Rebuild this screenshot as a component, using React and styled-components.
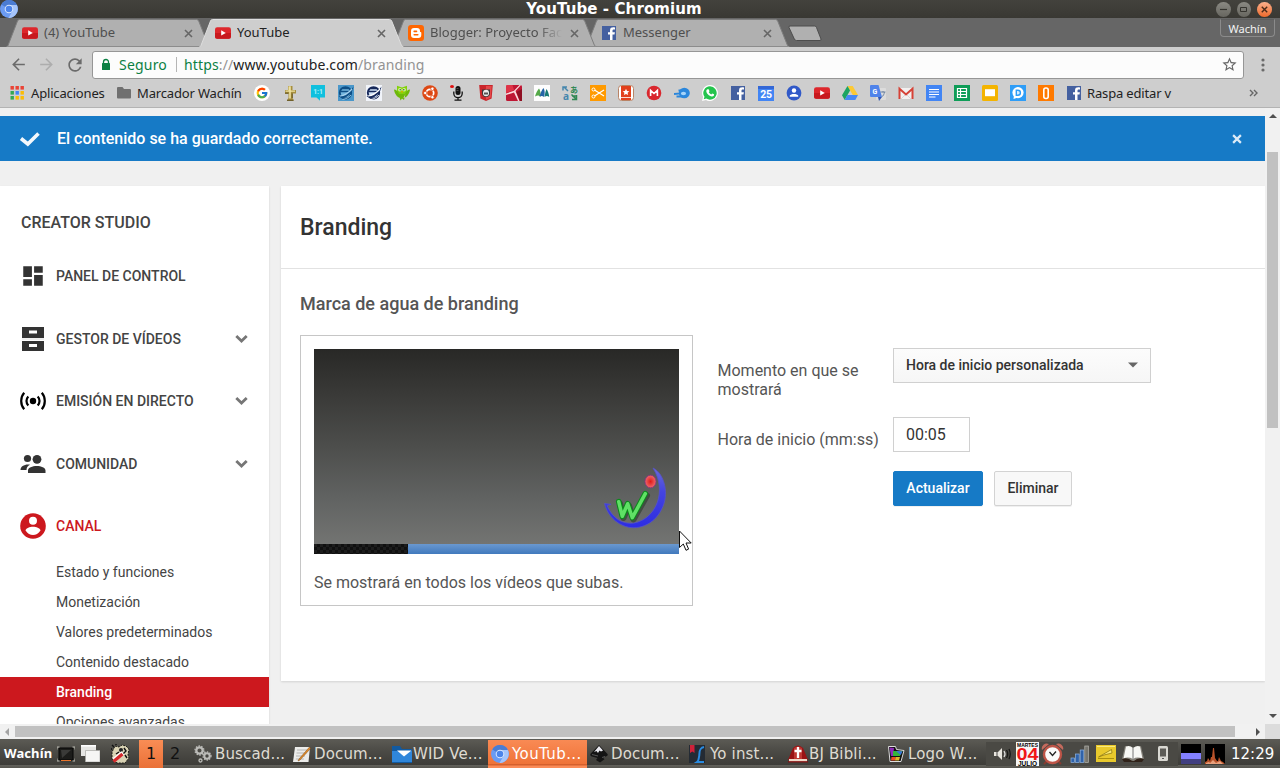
import React from "react";
import styled, { createGlobalStyle } from "styled-components";
import { MdDashboard, MdStarBorder, MdArrowBack, MdArrowForward, MdRefresh } from "react-icons/md";
import { FcGoogle } from "react-icons/fc";

const Global = createGlobalStyle`
  * { box-sizing: border-box; }
  html, body { margin: 0; padding: 0; overflow: hidden; }
  body { width: 1280px; height: 768px; background: #f0f0f0; font-family: Roboto, sans-serif; }
  svg { display: block; flex: none; }
`;

const ui = `"Noto Sans", "Open Sans", sans-serif`;
const desk = `"DejaVu Sans", sans-serif`;

const Screen = styled.div`
  width: 1280px;
  height: 768px;
  display: flex;
  flex-direction: column;
  overflow: hidden;
`;

/* ---------- window frame ---------- */
const TitleBar = styled.header`
  height: 18px;
  flex: none;
  display: grid;
  grid-template-columns: 64px 1fr 64px;
  align-items: center;
  background: linear-gradient(#43423d, #393833);
`;
const Title = styled.div`
  justify-self: center;
  padding-right: 52px;
  font: bold 15px/17px ${desk};
  letter-spacing: 0.1px;
  color: #fff;
`;
const WindowButtons = styled.div`
  display: flex;
  gap: 6px;
  justify-content: flex-end;
  padding-right: 8px;
`;
const WindowButton = styled.span`
  width: 15px;
  height: 15px;
  border-radius: 50%;
  display: grid;
  place-items: center;
  background: ${(p) => (p.$close ? "linear-gradient(#fbb08c, #ee6a2c)" : "linear-gradient(#8b8a83, #66655f)")};
`;

const TabStrip = styled.nav`
  height: 29px;
  flex: none;
  display: flex;
  background: #666;
  padding: 1px 5px 0 6px;
`;
const TabBox = styled.div`
  width: 205px;
  height: 28px;
  margin-right: -12px;
  padding: 0 18px 0 16px;
  display: flex;
  align-items: center;
  position: relative;
  z-index: ${(p) => (p.$active ? 5 : p.$z)};
  font: 13px/18px ${ui};
  color: ${(p) => (p.$active ? "#222" : "#4f4f4f")};
`;
const TabShape = styled.svg`
  position: absolute;
  inset: 0;
  z-index: -1;
`;
const TabIcon = styled.span`
  width: 16px;
  margin-right: 6px;
  flex: none;
`;
const TabLabel = styled.span`
  flex: 1;
  white-space: nowrap;
  overflow: hidden;
  margin: -2px 8px 0 0;
  ${(p) => p.$fade && "mask-image: linear-gradient(90deg, #000 108px, transparent 132px);"}
`;
const NewTab = styled.div`
  padding: 6px 0 0 9px;
`;
const UserTag = styled.div`
  margin-left: auto;
  width: 55px;
  height: 18px;
  border: 1px solid #8b8b8b;
  border-top-color: #5e5e5e;
  border-radius: 0 0 4px 4px;
  color: #f4f4f4;
  font: 11px/18px ${ui};
  text-align: center;
`;

const Toolbar = styled.div`
  height: 36px;
  flex: none;
  display: flex;
  align-items: center;
  padding: 0 10px 1px 9px;
  background: #cecece;
`;
const NavButtons = styled.div`
  display: flex;
  align-items: center;
  gap: 9px;
  width: 83px;
`;
const Omnibox = styled.div`
  width: 1152px;
  height: 28px;
  border: 1px solid #969696;
  border-radius: 3px;
  background: #fcfcfc;
  display: flex;
  align-items: center;
  padding: 0 5px;
  font: 14px/20px ${ui};
  color: #939393;
`;
const Secure = styled.span`
  color: #0b8043;
  margin-left: 5px;
  padding-right: 9px;
  height: 15px;
  line-height: 15px;
  letter-spacing: 0.2px;
  border-right: 1px solid #b5b5b5;
  margin-right: 7px;
`;
const Url = styled.span`
  flex: 1;
  white-space: nowrap;
  letter-spacing: 0.13px;
  b { font-weight: 400; color: #222; }
  i { font-style: normal; color: #0b8043; }
`;
const MenuDots = styled.div`
  margin-left: 17px;
`;
const Bookmarks = styled.div`
  height: 25px;
  flex: none;
  display: flex;
  align-items: center;
  padding: 0 22px 4px 10px;
  background: #cecece;
  border-bottom: 1px solid #b3b3b3;
  font: 13px/18px ${ui};
  letter-spacing: -0.16px;
  color: #222;
`;
const BookmarkText = styled.span`
  margin-left: ${(p) => p.$gap}px;
  width: ${(p) => p.$w}px;
  white-space: nowrap;
`;
const BookmarkIcons = styled.div`
  display: flex;
  gap: 12px;
`;
const More = styled.span`
  margin-left: auto;
`;

/* ---------- page ---------- */
const Viewport = styled.div`
  display: grid;
  grid-template-columns: 1265px 15px;
  grid-template-rows: 616px 15px;
  flex: none;
  background: #f1f1f1;
`;
const Page = styled.div`
  overflow: hidden;
  background: #f0f0f0;
  padding-top: 8px;
  display: flex;
  flex-direction: column;
`;
const Banner = styled.div`
  height: 45px;
  flex: none;
  background: #167ac6;
  color: #fff;
  display: flex;
  align-items: center;
  padding: 0 23px 0 19px;
  font-size: 16px;
  font-weight: 500;
  span { flex: 1; margin-left: 16px; }
`;
const Columns = styled.div`
  flex: 1;
  min-height: 0;
  display: flex;
  gap: 12px;
  padding-top: 25px;
`;
const Sidebar = styled.aside`
  width: 269px;
  background: #fff;
  box-shadow: 0 1px 2px rgba(0, 0, 0, 0.12);
  overflow: hidden;
`;
const StudioTitle = styled.h2`
  margin: 0;
  padding: 27px 0 0 21px;
  font: 500 16px/20px Roboto, sans-serif;
  color: #444;
`;
const MenuItem = styled.div`
  height: 26px;
  margin-top: ${(p) => p.$top}px;
  padding: 0 21px 0 20px;
  display: flex;
  align-items: center;
  font-size: 14px;
  font-weight: 500;
  color: ${(p) => (p.$active ? "#cc181e" : "#444")};
  span { margin-left: 10px; flex: 1; }
`;
const SubList = styled.ul`
  list-style: none;
  margin: 18px 0 0;
  padding: 0;
`;
const SubItem = styled.li`
  height: 30px;
  padding-left: 56px;
  font-size: 14px;
  line-height: 30px;
  color: ${(p) => (p.$active ? "#fff" : "#444")};
  font-weight: ${(p) => (p.$active ? 500 : 400)};
  background: ${(p) => (p.$active ? "#cc181e" : "transparent")};
`;
const Main = styled.main`
  flex: 1;
  height: 495px;
  background: #fff;
  box-shadow: 0 1px 2px rgba(0, 0, 0, 0.12);
`;
const PageTitle = styled.h1`
  margin: 0;
  height: 83px;
  padding: 0 19px;
  border-bottom: 1px solid #e2e2e2;
  font: 500 23px/84px Roboto, sans-serif;
  color: #333;
`;
const Section = styled.section`
  padding: 0 19px;
`;
const SectionTitle = styled.h3`
  margin: 0;
  padding: 24px 0 20px;
  font: 500 18px/22px Roboto, sans-serif;
  color: #555;
`;
const Row = styled.div`
  display: flex;
  gap: 24px;
`;
const PreviewCard = styled.figure`
  margin: 0;
  width: 393px;
  height: 271px;
  border: 1px solid #c6c6c6;
  padding: 13px;
  color: #555;
`;
const Preview = styled.div`
  width: 365px;
  height: 205px;
  background: linear-gradient(#282826 0, #3a3a38 46px, #4d4e4c 98px, #616362 150px, #737472 195px);
  display: flex;
  flex-direction: column;
  justify-content: flex-end;
  position: relative;
`;
const Watermark = styled.svg`
  align-self: flex-end;
  margin: 0 10px 12px 0;
`;
const Progress = styled.div`
  height: 10px;
  display: flex;
  background: linear-gradient(#6a98cf, #4179bd);
`;
const Played = styled.div`
  width: 94px;
  background: repeating-conic-gradient(#101010 0 25%, #1d1d1d 0 50%) 0 0 / 6px 6px;
`;
const Caption = styled.figcaption`
  margin-top: 19px;
  font-size: 16px;
  line-height: 20px;
`;
const Pointer = styled.svg`
  position: absolute;
  left: 365px;
  top: 181px;
`;
const Form = styled.div`
  display: grid;
  grid-template-columns: 176px 258px;
  grid-template-rows: 69px 54px 35px;
  padding-top: 13px;
`;
const Label = styled.label`
  padding: 13px 0 0 0.5px;
  font-size: 16px;
  line-height: 19px;
  color: #555;
`;
const Select = styled.div`
  height: 35px;
  border: 1px solid #d0d0d0;
  background: linear-gradient(#fcfcfc, #f6f6f6);
  display: flex;
  align-items: center;
  justify-content: space-between;
  padding: 0 11px 1px 12px;
  font-size: 14px;
  font-weight: 500;
  color: #333;
`;
const TimeField = styled.div`
  width: 77px;
  height: 35px;
  border: 1px solid #d0d0d0;
  padding-left: 12px;
  font-size: 16px;
  line-height: 33px;
  color: #333;
`;
const Actions = styled.div`
  grid-column: 2;
  display: flex;
  gap: 11px;
`;
const Button = styled.button`
  width: ${(p) => p.$w}px;
  height: 35px;
  padding: 0 0 2px;
  border: 1px solid ${(p) => (p.$primary ? "#167ac6" : "#d3d3d3")};
  border-radius: 2px;
  background: ${(p) => (p.$primary ? "#167ac6" : "#f8f8f8")};
  color: ${(p) => (p.$primary ? "#fff" : "#333")};
  font: 500 14px Roboto, sans-serif;
  box-shadow: 0 1px 0 rgba(0, 0, 0, 0.06);
`;
const VScroll = styled.div`
  display: flex;
  flex-direction: column;
  align-items: center;
  padding: 6px 0;
`;
const VThumb = styled.div`
  width: 11px;
  height: 276px;
  margin: 34px 0 auto;
  background: #c1c1c1;
`;
const HScroll = styled.div`
  display: flex;
  align-items: center;
  padding: 0 5px;
`;
const HThumb = styled.div`
  width: 1220px;
  height: 11px;
  margin: 0 auto 0 6px;
  background: #c1c1c1;
`;
const Corner = styled.div`
  background: #dcdcdc;
`;

/* ---------- taskbar ---------- */
const Taskbar = styled.footer`
  height: 29px;
  flex: none;
  display: flex;
  align-items: center;
  background: linear-gradient(#5c5b55, #4c4b46 40%, #3d3c38 26px, #63625c 26px, #56554f);
  font: 15px/28px ${desk};
  color: #dfdbd2;
`;
const StartLabel = styled.span`
  width: 57px;
  padding-left: 4px;
  font: bold 13px/27px ${ui};
  letter-spacing: 0.1px;
  color: #fff;
  white-space: nowrap;
`;
const Launchers = styled.div`
  display: flex;
  align-items: center;
  width: 82px;
`;
const Launch = styled.span`
  margin-right: ${(p) => p.$gap}px;
`;
const Desk = styled.span`
  width: ${(p) => (p.$active ? 24 : 28)}px;
  height: 28px;
  align-self: flex-end;
  text-align: center;
  font-size: 16px;
  line-height: 27px;
  color: #111;
  background: ${(p) => (p.$active ? "linear-gradient(#f98d55, #ea7138)" : "none")};
  padding-right: ${(p) => (p.$active ? 0 : 4)}px;
`;
const Task = styled.div`
  width: 99px;
  height: 28px;
  align-self: flex-end;
  padding-left: 3px;
  display: flex;
  align-items: center;
  white-space: nowrap;
  letter-spacing: ${(p) => (p.$active ? 0.4 : 0.15)}px;
  background: ${(p) => (p.$active ? "linear-gradient(#f98a54, #ef7338 24px, #d5602c 24px, #d5602c 25px, #fb8c58 26px)" : "none")};
  color: ${(p) => (p.$active ? "#fff" : "#dfdbd2")};
`;
const TaskIcon = styled.span`
  width: 21px;
  flex: none;
`;
const Tray = styled.div`
  margin-left: 3px;
  width: 192px;
  height: 24px;
  background: #4a4944;
  display: flex;
  align-items: center;
`;
const TrayIcon = styled.span`
  width: ${(p) => p.$w}px;
  flex: none;
`;
const Meters = styled.div`
  display: flex;
  gap: 4px;
  padding-left: 3px;
`;
const Clock = styled.span`
  padding-left: 6px;
  color: #fff;
`;

/* ---------- icons ---------- */
const S = ({ w = 16, h, vb, children }) => (
  <svg width={w} height={h || w} viewBox={vb || `0 0 ${w} ${h || w}`}>{children}</svg>
);
const T = ({ x, y, s, f = "#fff", children }) => (
  <text x={x} y={y} fontSize={s} fill={f} textAnchor="middle" fontWeight="bold" fontFamily="Roboto, sans-serif">{children}</text>
);
const YouTube = () => (
  <S><rect y="2.3" width="16" height="11.4" rx="2.2" fill="#dd272c" /><path d="M0 8h16v3.500q0 2.200-2.200 2.200H2.200Q0 13.700 0 11.500z" fill="#c8191e" /><path d="M6.2 5.3v5.2L10.8 7.9z" fill="#fff" /></S>
);
const Facebook = () => (
  <S><path d="M1 1h14v14H1z" fill="#4460a0" /><path d="M11.500 15V9.600h2l.4-2.300h-2.400V5.800c0-.8.4-1.200 1.300-1.200h1.200V2.500C12 2.100 9 2 9 5.400v1.900H7v2.300h2V15z" fill="#fff" /></S>
);
const Blogger = () => (
  <S><rect width="16" height="16" rx="3" fill="#ff6600" /><path fillRule="evenodd" d="M6 3h3a3 3 0 0 1 3 3v.6c0 .4.2.5.6.5.5 0 .7.2.7.7V10a3 3 0 0 1-3 3H6a3 3 0 0 1-3-3V6a3 3 0 0 1 3-3zm.2 2.600a.8.8 0 0 0 0 1.600h2.300a.8.8 0 0 0 0-1.600zm0 3.400a.8.8 0 0 0 0 1.600h3.600a.8.8 0 0 0 0-1.600z" fill="#fff" /></S>
);
const Close = ({ s = 9, c = "#666", sw = 1.6 }) => (
  <S w={s} vb="0 0 9 9"><path d="M1 1l7 7M8 1L1 8" stroke={c} strokeWidth={sw} /></S>
);
const Chromium = ({ w = 18 }) => (
  <S w={w} vb="0 0 18 18">
    <circle cx="9" cy="9" r="9" fill="#6b9bf2" />
    <path d="M9 9L1.200 4.500A9 9 0 0 1 16.800 4.500z" fill="#4b7cd2" />
    <path d="M9 5h7.800A9 9 0 0 1 8.500 18L12.500 11z" fill="#a5c4fa" />
    <circle cx="9" cy="9" r="4.300" fill="#dbe8fd" /><circle cx="9" cy="9" r="3.300" fill="#4c84ea" />
  </S>
);
const Apps = () => (
  <S w={14}>
    {["#ea4335", "#ea4335", "#ea4335", "#34a853", "#4285f4", "#fbbc05", "#34a853", "#fbbc05", "#fbbc05"].map((c, i) => (
      <rect key={i} x={0.5 + (i % 3) * 5} y={Math.floor(i / 3) * 5} width="3.4" height="3.6" fill={c} />
    ))}
  </S>
);
const Globe = ({ square }) => {
  const dark = square ? "#0f4f86" : "#16285a";
  const light = square ? "#a5d2ee" : "#ffffff";
  return (
    <S>
      <rect width="16" height="16" fill={square ? "#4a97ca" : "#f1f4fa"} />
      <circle cx="7.500" cy="7.800" r="5.700" fill={square ? "#74b5dd" : "#cfe0f6"} stroke={dark} strokeWidth="1.900" />
      <path d="M4.500 3.500h6M3 6.500h8" stroke={dark} strokeWidth="1.300" />
      <path d="M.5 11C5 11.500 11 8 15.500 1.500 14.500 8 10 12 4 13.500z" fill={dark} />
      <path d="M2 11C7 10.500 11 7.500 14 4" stroke={light} strokeWidth="1.200" fill="none" />
      <path d="M4.500 14.500C8 14 11 12.500 13 10" stroke={light} strokeWidth=".8" fill="none" />
    </S>
  );
};
const bookmarkIcons = [
  <S><circle cx="8" cy="8" r="8" fill="#fff" /><g transform="translate(1.600 1.600)"><FcGoogle size={12.800} /></g></S>,
  <S><path d="M6 1h4.500v4H14v3.400h-3.500V13l1.500 2.500H4.800L6.500 13V8.400H3V5h3z" fill="#a58e3e" /><path d="M6.500 1.300h2.300v4.200H13v1.200H8.800V13.500H7.200V6.700H3.500V5.400h3z" fill="#efe2a0" /><path d="M10.200 8.400V13M3 8.200h3.500M5 15.300h6.500" stroke="#5e4d14" /></S>,
  <S><path d="M1 0h14v12.500H10v3.300L6.500 12.500H1z" fill="#10c0de" /><T x="8" y="8.500" s="7" f="#a8f0fa">1:1</T></S>,
  <Globe square />,
  <Globe />,
  <S><path d="M3 .8L8 2.500l5-1.700v6c0 1.600-1 3-2.300 3.800L8 12l-2.700-1.400C4 9.800 3 8.400 3 6.800z" fill="#83d10c" /><path d="M0 4.500c2 0 4 1.500 5 4.500l1.500 4C3 12.500.5 8.500 0 4.500zM16 4.500c-2 0-4 1.500-5 4.500l-1.500 4C13 12.500 15.500 8.500 16 4.500zM4.500 9h7l-1.500 6-2-1.500L6.500 15.500z" fill="#6db80a" /><circle cx="5.900" cy="4.800" r="1.800" fill="#d9f59b" /><circle cx="10.100" cy="4.800" r="1.800" fill="#d9f59b" /><circle cx="6.200" cy="4.800" r=".7" fill="#345" /><circle cx="9.800" cy="4.800" r=".7" fill="#345" /><path d="M7 6.200h2L8 8z" fill="#f90" /></S>,
  <S><circle cx="8" cy="8" r="7.800" fill="#dd4814" /><circle cx="8" cy="8" r="3.700" fill="none" stroke="#fff" strokeWidth="1.700" /><g fill="#fff" stroke="#dd4814" strokeWidth=".8"><circle cx="3.200" cy="8" r="1.700" /><circle cx="10.400" cy="3.800" r="1.700" /><circle cx="10.400" cy="12.200" r="1.700" /></g></S>,
  <S><ellipse cx="2" cy="1.500" rx="2" ry="1.500" fill="#e01010" /><rect x="5.500" y="1" width="5" height="9" rx="2.500" fill="#111" /><path d="M3.800 6.500v2a4.200 4.200 0 0 0 8.400 0v-2M8 12.500V15M4.500 15.200h7" stroke="#111" strokeWidth="1.300" fill="none" /><path d="M6.500 3.500h2M6.500 5.500h2" stroke="#666" strokeWidth=".7" /></S>,
  <S><path d="M1.200 0h13.600l-1.200 13.500L8 16l-5.600-2.500z" fill="#c9252b" /><path d="M8 1h5.700l-.9 11.500L8 14.700z" fill="#e4484a" /><path d="M4 4.500h8V8a4 4 0 0 1-8 0z" fill="#3a3a3a" /><ellipse cx="8" cy="8" rx="3" ry="3.200" fill="#ececec" /><path d="M6 7.500h4v2H6z" fill="#555" /></S>,
  <S><rect width="16" height="16" rx="1.500" fill="#bf1734" /><path d="M1 0h5.500L8 5l-8 3V1z" fill="#df3448" /><path d="M0 8.500L8 5.800 13.500 0H15L9.500 6l4 10H12L8 7.500 0 10z" fill="#fbdadd" /><path d="M10.500 7L16 4v12h-2z" fill="#8f1023" /></S>,
  <S><rect width="16" height="16" fill="#fdfdfd" /><path d="M1 11.500C2 8 3.500 5 5 3.500 6.500 5.500 7 9 6.500 12 5 10 3.500 10 1 11.500z" fill="#54a948" /><path d="M5.500 11.500C6.500 8 8 4.500 9.500 3c1.500 2.500 1.500 6 .5 9-1-1-2.500-1.500-4.500-.5z" fill="#2463a6" /><path d="M10.500 12c.5-3 1-6 2-8 1.500 2 2.500 5 2.700 8-1.500-1.500-3-1.500-4.700 0z" fill="#177a73" /></S>,
  <S><text x="12" y="7.500" fontSize="8" fill="#2f8752" textAnchor="middle" fontFamily="Noto Sans CJK JP, sans-serif" fontWeight="bold">あ</text><text x="4" y="15" fontSize="10" fill="#4586ad" textAnchor="middle" fontFamily="Noto Sans, sans-serif" fontWeight="bold">a</text><path d="M1 5.500V2h4M2 2l4 4" stroke="#4586ad" strokeWidth="1.500" fill="none" /><path d="M14.500 10v4.500H10M14 14L9.500 9.500M10 11h4" stroke="#2f8752" strokeWidth="1.500" fill="none" /></S>,
  <S><rect width="16" height="16" fill="#ff9a00" /><path d="M4.500 5L14 11M4.500 11L14 5" stroke="#fff" strokeWidth="1.200" /><circle cx="3.500" cy="4.500" r="1.500" fill="none" stroke="#fff" /><circle cx="3.500" cy="11.500" r="1.500" fill="none" stroke="#fff" /></S>,
  <S><rect x=".5" y=".5" width="15" height="15" rx="3" fill="#fff" stroke="#b98365" /><path d="M3 1h10v14H3z" fill="#e2401c" /><path d="M8 3.800l1 2.100 2.300.3-1.700 1.500.5 2.300L8 8.900 5.900 10l.5-2.300L4.700 6.200 7 5.900z" fill="#fff" /><path d="M3 12.500h10" stroke="#fff" strokeWidth=".8" /></S>,
  <S><circle cx="8" cy="8" r="7.300" fill="#d9272e" /><path d="M4.600 11V5.300L8 8.500l3.400-3.200V11" stroke="#fff" strokeWidth="1.600" fill="none" /></S>,
  <S><path d="M0 9l7-.6M2.500 11.500H8M4.500 5.500H8" stroke="#2b87dc" strokeWidth="1.800" /><ellipse cx="10.300" cy="8" rx="5.500" ry="5.300" fill="#2b87dc" /><ellipse cx="9.500" cy="8.500" rx="2.600" ry="1.700" fill="#a5d4fa" /></S>,
  <S><path d="M8 0a8 8 0 1 1-4 15L0 16l1.100-4A8 8 0 0 1 8 0z" fill="#fff" /><path d="M8 1.300a6.700 6.700 0 1 1-3.700 12.300L1.700 14.300l.8-2.500A6.700 6.700 0 0 1 8 1.300z" fill="#24c44d" /><path d="M5.500 4.300l1.200 0 .8 2-.7.900c.7 1.200 1.300 1.700 2.500 2.200l.9-1 1.900.9c.1 1.500-1 2.300-2.200 2.200C7 11 4.500 8.500 4.300 6.200c0-.8.5-1.600 1.200-1.900z" fill="#fff" /></S>,
  <Facebook />,
  <S><rect y="1" width="16" height="15" fill="#4285f4" /><path d="M0 1h16v3H0z" fill="#3367d6" /><T x="8" y="13.200" s="10.500">25</T></S>,
  <S><circle cx="8" cy="8" r="7.400" fill="#3159c8" /><circle cx="8" cy="5.500" r="2.200" fill="#fff" /><path d="M3.800 11.800V10.500C4.500 8.400 11.500 8.400 12.200 10.500v1.300z" fill="#fff" /></S>,
  <YouTube />,
  <S><path d="M5.500 1h5.200L16 10H10.800z" fill="#fcc934" /><path d="M5.500 1L0 10.300 2.700 15 8 5.500z" fill="#1da462" /><path d="M5.300 10H16l-2.700 5H2.700z" fill="#4688f4" /></S>,
  <S><rect x="6" y="3" width="10" height="12" rx="1" fill="#dcdcdc" /><path d="M0 1q0-1 1-1h7.500l3.500 12H1a1 1 0 0 1-1-1z" fill="#4f83ea" /><path d="M8 12h4l-3 4z" fill="#3157b5" /><T x="4.700" y="8.700" s="7">G</T><path d="M10.500 7h5M13 6v1.500M11.500 12c2-1 2.600-3 3-5" stroke="#7186a3" fill="none" /></S>,
  <S><path d="M1.500 3h13v11h-13z" fill="#f2f0f0" /><path d="M1.500 14V3.800L8 9.500l6.500-5.700V14" fill="none" stroke="#d64237" strokeWidth="2" /><path d="M3 14l4-4M13 14L9 10" stroke="#d8d4d4" /></S>,
  <S><rect width="16" height="16" fill="#4285f4" /><path d="M3 4.500h10M3 7h10M3 9.500h10M3 12h6.500" stroke="#fff" strokeWidth="1.200" /></S>,
  <S><rect width="16" height="16" fill="#0f9d58" /><path d="M3.500 3.500h9v9h-9zM3.500 6.500h9M3.500 9.500h9M6.500 3.500v9" stroke="#fff" strokeWidth="1.200" fill="none" /></S>,
  <S><rect width="16" height="16" rx="1.500" fill="#f4b400" /><path d="M3 4.200h10v7H3z" fill="#fff" /></S>,
  <S><rect width="16" height="16" fill="#2e9df7" /><circle cx="8" cy="7.600" r="5.600" fill="#fff" /><path d="M4 10l-.5 4L8 12.500z" fill="#fff" /><path d="M6.300 5.200h1.600a2.500 2.500 0 0 1 0 5H6.300z" fill="#d6ecfe" stroke="#2e9df7" strokeWidth="1.400" /></S>,
  <S><rect width="16" height="16" fill="#ff7a00" /><rect x="5.800" y="3" width="4.400" height="10.500" rx="2" fill="#ff7a00" stroke="#fff" strokeWidth="1.600" /></S>,
  <Facebook />,
];
const Drawer = () => (
  <S w={26}><path d="M2 1h22v11H2zM2 15h22v10H2z" fill="#333" /><path d="M2 13h22" stroke="#d5d5d5" strokeWidth=".8" /><path d="M9 4.500h8v3H9zM9 18h8v3H9z" fill="#fff" /></S>
);
const Live = () => (
  <S w={26}><circle cx="13" cy="13" r="3.200" /><path d="M8.300 8.500a6.500 6.500 0 0 0 0 9M17.700 8.500a6.500 6.500 0 0 1 0 9M4.200 4.800c-4 4.500-4 12 0 16.500M21.800 4.800c4 4.500 4 12 0 16.500" fill="none" stroke="#000" strokeWidth="2.200" /></S>
);
const Chevron = () => (
  <S w={13} h={11}><path d="M1.300 2L6.500 7 11.700 2" stroke="#767676" strokeWidth="2.800" fill="none" /></S>
);
const Tri = ({ d, c = "#505050", w = 8, h = 8 }) => <S w={w} h={h}><path d={d} fill={c} /></S>;

const taskIcons = {
  gears: <S w={18}><g fill="none" stroke="#bcbcb8"><circle cx="5.500" cy="5.500" r="3.200" strokeWidth="2.300" /><circle cx="5.500" cy="5.500" r="4.500" strokeWidth="1.300" strokeDasharray="1.500 1.300" /><circle cx="13" cy="11" r="2.700" strokeWidth="2" /><circle cx="13" cy="11" r="4" strokeWidth="1.300" strokeDasharray="1.400 1.200" /><circle cx="6.500" cy="15.500" r="1.500" strokeWidth="1.300" /></g></S>,
  doc: <S w={18}><path d="M2 2h15l-1.500 15H0z" fill="#ececea" /><path d="M4 5h10M3.500 8h10M3 11h9M2.800 14h8" stroke="#b4b4b2" /><path d="M16.500 2L6 14l-1 2 2-1L17.500 3.500z" fill="#e28a26" stroke="#7c4b16" strokeWidth=".5" /></S>,
  mail: <S w={20} h={18}><path d="M0 1h8l2 3h10v14H0z" fill="#125aa0" /><path d="M0 6h20v11H0z" fill="#2f86da" /><path d="M5 5.500h14.500L12 11.500z" fill="#fff" /></S>,
  chromium: <Chromium />,
  ink: <S w={18}><path d="M9 0l8.500 9c1 1.500-1 2.300-2.500 2.700l-2 1 1.500 1.500L10 17.500 6 15l1.500-2L2 11.500C0 10.500-.2 9.500 1 8.300z" fill="#141414" /><path d="M9 1l4 4.500-2 1-1.500-1L8 8 6.500 6 4 7z" fill="#e9e9ef" /><path d="M2 9.500l6 1.500M12 12.500l3-1" stroke="#555" /></S>,
  yo: <S w={16} h={18}><rect width="16" height="18" fill="#242b34" /><path d="M1 0h4.500v8L3.300 6.500 1 8z" fill="#cf2139" /><path d="M15 2C9 3 11 9 10 12q-.5 4-2 5h7" stroke="#2a8be0" strokeWidth="2" fill="none" /></S>,
  bible: <S w={20} h={18}><path d="M5 3Q10-2 15 3l5 12H0z" fill="#991315" /><path d="M6 3Q10 0 14 3v11H6z" fill="#c7413b" opacity=".8" /><path d="M10 2v11M6.500 6h7" stroke="#fff" strokeWidth="2.300" /><path d="M1 14h18v3H1z" fill="#efd8c8" /><path d="M0 16.800h20" stroke="#841010" strokeWidth="1.300" /></S>,
  logo: <S w={18}><path d="M1.500 1.500l7 0 1 3 7.500 1-3 11-11 0z" fill="#111" stroke="#ddd" strokeWidth="1" /><path d="M2.500 2.500l4.500.5-1 8-2 0z" fill="#8e2bb8" /><path d="M6 6h9.500l-2.500 5H6z" fill="#35b43a" /><path d="M9 6l6.500.5-2 3.500z" fill="#3b6ee0" /><path d="M4.500 12h4l-.5 3.500h-4z" fill="#ef4a22" /><path d="M8.500 12H13l-1 3.500H8z" fill="#e0b52a" /></S>,
};
const tasks = [["gears", "Buscad..."], ["doc", "Docum..."], ["mail", "WID Ve..."], ["chromium", "YouTub..."], ["ink", "Docum..."], ["yo", "Yo inst..."], ["bible", "BJ Bibli..."], ["logo", "Logo W..."]];

const Tab = ({ icon, children, active, z, fade }) => (
  <TabBox $active={active} $z={z}>
    <TabShape width="205" height="28">
      <path d="M0.500 28L2 26.500 11.500 2Q12 .5 13.500 .5H190.500Q192 .5 192.700 2L202.500 26.500 204.500 28" fill={active ? "#cecece" : "#b0b0b0"} stroke={active ? "#dedede" : "#7e7e7e"} />
      {!active && <path d="M1 27.500H204" stroke="#8c8c8c" />}
    </TabShape>
    <TabIcon>{icon}</TabIcon>
    <TabLabel $fade={fade}>{children}</TabLabel>
    <Close />
  </TabBox>
);

export default function App() {
  return (
    <Screen>
      <Global />
      <TitleBar>
        <Chromium />
        <Title>YouTube - Chromium</Title>
        <WindowButtons>
          <WindowButton><S w={7}><path d="M0 3.500h7" stroke="#35342f" strokeWidth="1.200" /></S></WindowButton>
          <WindowButton><S w={7}><path d="M.5 1.500h6v4h-6z" stroke="#35342f" fill="none" /></S></WindowButton>
          <WindowButton $close><Close s={7} c="#4a2a18" sw={1.8} /></WindowButton>
        </WindowButtons>
      </TitleBar>
      <TabStrip>
        <Tab icon={<YouTube />} z={4}>(4) YouTube</Tab>
        <Tab icon={<YouTube />} active>YouTube</Tab>
        <Tab icon={<Blogger />} z={3} fade>Blogger: Proyecto Facilitado</Tab>
        <Tab icon={<Facebook />} z={2}>Messenger</Tab>
        <NewTab><S w={36} h={17}><path d="M3 1h24.500q1.500 0 2 1.500L34 14q.4 1.500-1 1.500H9.500Q8 15.500 7.300 14L2 2.500Q1.500 1 3 1z" fill="#b0b0b0" stroke="#4d4d4d" /></S></NewTab>
        <UserTag>Wachín</UserTag>
      </TabStrip>
      <Toolbar>
        <NavButtons>
          <MdArrowBack size={19} color="#6b6b6b" />
          <MdArrowForward size={19} color="#adadad" />
          <MdRefresh size={20} color="#6b6b6b" />
        </NavButtons>
        <Omnibox>
          <S w={16}><rect x="4" y="6" width="8" height="7" rx=".5" fill="#0b8043" /><path d="M5.500 6.500V5a2.500 2.500 0 0 1 5 0v1.500" fill="none" stroke="#0b8043" strokeWidth="1.300" /></S>
          <Secure>Seguro</Secure>
          <Url><i>https</i>://<b>www.youtube.com</b>/branding</Url>
          <MdStarBorder size={17} color="#666" />
        </Omnibox>
        <MenuDots><S w={4} h={14}>{[2, 7, 12].map((y) => <circle key={y} cx="2" cy={y} r="1.600" fill="#6a6a6a" />)}</S></MenuDots>
      </Toolbar>
      <Bookmarks>
        <Apps />
        <BookmarkText $gap={7} $w={84}>Aplicaciones</BookmarkText>
        <S w={18} h={14}><path d="M2 2q0-1 1-1h4.500l1.500 2H15q1 0 1 1v7.500q0 1-1 1H3q-1 0-1-1z" fill="#707070" /></S>
        <BookmarkText $gap={4} $w={117}>Marcador Wachín</BookmarkText>
        <BookmarkIcons>{bookmarkIcons.map((icon, i) => <React.Fragment key={i}>{icon}</React.Fragment>)}</BookmarkIcons>
        <BookmarkText $gap={5} $w={90}>Raspa editar v</BookmarkText>
        <More><S w={9} h={8}><path d="M1 1l3 3-3 3M5 1l3 3-3 3" stroke="#666" strokeWidth="1.400" fill="none" /></S></More>
      </Bookmarks>
      <Viewport>
        <Page>
          <Banner>
            <S w={22} h={16}><path d="M2 7.500L8.800 13 19.500 2.500" stroke="#fff" strokeWidth="3.600" fill="none" opacity=".95" /></S>
            <span>El contenido se ha guardado correctamente.</span>
            <Close s={10} c="#dcebf7" sw={2} />
          </Banner>
          <Columns>
            <Sidebar>
              <StudioTitle>CREATOR STUDIO</StudioTitle>
              <MenuItem $top={30}><MdDashboard size={26} color="#333" /><span>PANEL DE CONTROL</span></MenuItem>
              <MenuItem $top={37}><Drawer /><span>GESTOR DE VÍDEOS</span><Chevron /></MenuItem>
              <MenuItem $top={36}><Live /><span>EMISIÓN EN DIRECTO</span><Chevron /></MenuItem>
              <MenuItem $top={37}>
                <S w={26}><circle cx="7.500" cy="7.500" r="3.600" fill="#333" /><circle cx="17" cy="8.300" r="4.400" fill="#333" /><path d="M.5 19c0-3.500 4-6 9.500-5.300-2.500 1.300-3.500 3-3.500 5.300zM8 22v-2.500c0-6 17.500-6 17.500 0V22z" fill="#333" /></S>
                <span>COMUNIDAD</span><Chevron />
              </MenuItem>
              <MenuItem $top={36} $active><S w={26}><circle cx="13" cy="13" r="12.800" fill="#cc181e" /><circle cx="13" cy="7.800" r="4" fill="#fff" /><path d="M5.500 17.500c1.500-5 13.500-5 15 0-4 6-11 6-15 0z" fill="#fff" /></S><span>CANAL</span></MenuItem>
              <SubList>
                {["Estado y funciones", "Monetización", "Valores predeterminados", "Contenido destacado", "Branding", "Opciones avanzadas"].map((t) => (
                  <SubItem key={t} $active={t === "Branding"}>{t}</SubItem>
                ))}
              </SubList>
            </Sidebar>
            <Main>
              <PageTitle>Branding</PageTitle>
              <Section>
                <SectionTitle>Marca de agua de branding</SectionTitle>
                <Row>
                  <PreviewCard>
                    <Preview>
                      <Watermark width="66" height="66" viewBox="0 0 66 66">
                        <defs>
                          <linearGradient id="arc" x1="0" y1="0" x2="0" y2="1"><stop offset="0" stopColor="#6a6ad8" /><stop offset=".4" stopColor="#4444e0" /><stop offset="1" stopColor="#2c2ce4" /></linearGradient>
                          <radialGradient id="dot"><stop offset="0" stopColor="#e01818" /><stop offset="1" stopColor="#ee6a6a" /></radialGradient>
                        </defs>
                        <path d="M50 2C62 8 66.500 29 58.500 43.500 51 59 34 65.500 20 59.500 9.500 55 3.500 46 1.500 37.500l6.500.8-4 1.200C10 53 20 58.500 31 57 53 53 64.500 25 50 2z" fill="url(#arc)" stroke="#5552c8" strokeWidth=".8" />
                        <ellipse cx="47.500" cy="15.500" rx="5.500" ry="6.300" fill="url(#dot)" stroke="#8b2d80" strokeWidth=".8" />
                        <g fill="none" strokeLinecap="round" strokeLinejoin="round">
                          <path d="M17 37.500l3.500 14.500 5.500-12.500 4.500 14L44 29.500" stroke="#2b3a2b" strokeOpacity=".6" strokeWidth="6" />
                          <path d="M15.700 35.700l3.600 14.600 5.400-12.600 4.600 14L42.300 27.700" stroke="#0c8a1c" strokeWidth="5.600" />
                          <path d="M15.700 35.700l3.600 14.600 5.400-12.600 4.600 14L42.300 27.700" stroke="#5fe065" strokeWidth="3.500" />
                        </g>
                      </Watermark>
                      <Progress><Played /></Progress>
                      <Pointer width="14" height="22" viewBox="0 0 14 22"><path d="M.5 1v16.500l3.800-3.500 2.700 6.300 2.600-1.200L7 13h5.200z" fill="#fff" stroke="#111" /></Pointer>
                    </Preview>
                    <Caption>Se mostrará en todos los vídeos que subas.</Caption>
                  </PreviewCard>
                  <Form>
                    <Label>Momento en que se<br />mostrará</Label>
                    <Select>Hora de inicio personalizada<Tri w={12} h={6} d="M1 .5h10L6 5.500z" c="#666" /></Select>
                    <Label>Hora de inicio (mm:ss)</Label>
                    <TimeField>00:05</TimeField>
                    <Actions><Button $primary $w={90}>Actualizar</Button><Button $w={78}>Eliminar</Button></Actions>
                  </Form>
                </Row>
              </Section>
            </Main>
          </Columns>
        </Page>
        <VScroll>
          <Tri w={8} h={4} d="M0 4l4-4 4 4z" />
          <VThumb />
          <Tri w={8} h={4} d="M0 0l4 4 4-4z" />
        </VScroll>
        <HScroll>
          <Tri w={4} h={8} d="M4 0L0 4l4 4z" c="#a3a3a3" />
          <HThumb />
          <Tri w={4} h={8} d="M0 0l4 4-4 4z" />
        </HScroll>
        <Corner />
      </Viewport>
      <Taskbar>
        <StartLabel>Wachín</StartLabel>
        <Launchers>
          <Launch $gap={6}><S w={18} h={16}><path d="M2 2h14v12H2z" fill="#1c1c1a" stroke="#050505" /><path d="M4 4h10L5 12z" fill="#3a3a38" /><path d="M0 3.500V1h2.500M15.500 1H18v2.500M0 12.500V15h2.500M15.500 15H18v-2.500" stroke="#b8b8b0" strokeWidth="1" fill="none" /><path d="M4 14.500h10" stroke="#e8742c" /></S></Launch>
          <Launch $gap={11}><S w={19} h={17}><path d="M0 0h15v11H0z" fill="#e6e6e3" /><path d="M0 .8h15" stroke="#fff" strokeWidth="1.600" /><path d="M4.500 5.500H19V17H4.500z" fill="#f6f6f4" stroke="#a8a8a3" strokeWidth=".7" /></S></Launch>
          <Launch $gap={0}><S w={20}><path d="M4 2l4 1 3-2 4 1 3 3-1 6 1 3-4 5-8 0-5-4V8z" fill="#d9d3b4" stroke="#1a1a16" strokeDasharray="2 1" /><circle cx="10" cy="6" r="2" fill="#222" /><path d="M13 4l2 3-3 3M3 3L1 1M5 1V0M1 5H0M8 8l-3 2M14 11l2 3" stroke="#111" strokeWidth="1.400" fill="none" /><path d="M3 16L12 9" stroke="#fff" strokeWidth="4.600" /><path d="M2.500 17.500L11.500 10" stroke="#d42a2c" strokeWidth="3.400" /></S></Launch>
        </Launchers>
        <Desk $active>1</Desk>
        <Desk>2</Desk>
        {tasks.map(([icon, label], i) => (
          <Task key={i} $active={icon === "chromium"}><TaskIcon>{taskIcons[icon]}</TaskIcon>{label}</Task>
        ))}
        <Tray>
          <TrayIcon $w={30}><S w={26} h={16}><path d="M8 6h4l4-4v12l-4-4H8z" fill="#e7e5de" /><path d="M11 6v4" stroke="#444" /><path d="M18 5q2 3 0 6" stroke="#ddd" strokeWidth="1.300" fill="none" /><path d="M20.500 4q2.500 4 0 8M23 3q2.500 5 0 10" stroke="#191917" fill="none" strokeWidth="1.300" /></S></TrayIcon>
          <TrayIcon $w={25}>
            <S w={23} h={24}><rect width="23" height="24" fill="#f6f6f6" /><text x="11.500" y="5" fontSize="6" fontWeight="bold" textAnchor="middle" fontFamily="Liberation Sans, sans-serif" textLength="21" lengthAdjust="spacingAndGlyphs">MARTES</text><text x="11.500" y="23.500" fontSize="6.500" fontWeight="bold" textAnchor="middle" fontFamily="Liberation Sans, sans-serif">JULIO</text><text x="11.500" y="17.500" fontSize="17" fontWeight="bold" fill="#f01616" textAnchor="middle" fontFamily="Liberation Sans, sans-serif" textLength="22" lengthAdjust="spacingAndGlyphs">04</text></S>
          </TrayIcon>
          <TrayIcon $w={29}><S w={23} h={22}><path d="M6 18l-3 3M17 18l3 3" stroke="#843b31" strokeWidth="2" /><path d="M1 7a5 5 0 0 1 7-6zM22 7a5 5 0 0 0-7-6z" fill="#c46a5d" /><circle cx="11.500" cy="11.500" r="8.500" fill="#fafafa" stroke="#bd5447" strokeWidth="2.400" /><path d="M8.500 9l3 3.500 3.500-4" stroke="#222" strokeWidth="1.300" fill="none" /></S></TrayIcon>
          <TrayIcon $w={26}><S w={20} h={18}>{[0, 1, 2, 3].map((i) => <rect key={i} x={1 + i * 4.6} y={13 - i * 4} width="3.600" height={4.5 + i * 4} fill={i === 3 ? "#77766f" : "#2f62aa"} stroke={i === 3 ? "#b5b5ae" : "#8fb5e4"} strokeWidth=".7" />)}</S></TrayIcon>
          <TrayIcon $w={26}><S w={20} h={17}><rect width="20" height="17" fill="#e9c92c" /><path d="M1 1.500h18" stroke="#f9e97e" /><path d="M2.500 12L15.500 4.500l.5 3.500L8 10z" fill="#fbeb76" stroke="#8f7810" strokeWidth=".8" /><path d="M2 13.500h16" stroke="#aa900f" /></S></TrayIcon>
          <TrayIcon $w={36}><S w={22} h={18}><path d="M3 1L11 3l8-2 3 13-10 2L0 14z" fill="#85827a" /><path d="M4 1.500Q8 0 11 3v11Q6 11.500 1.500 13.500zM11 3q4-3 7-1.500l2.500 12Q15 11.500 11 14z" fill="#f7f7f4" /><path d="M0 14q6-2 10 2h2q4-4 10-2l-2 3H2z" fill="#302219" /><path d="M11 3v11" stroke="#777" /></S></TrayIcon>
          <TrayIcon $w={12}><S w={10} h={15}><rect width="10" height="15" rx="1.500" fill="#d9d8d2" /><path d="M2 2.500h6v8H2z" fill="#5c5b56" /><path d="M4 12.500h2" stroke="#555" /></S></TrayIcon>
        </Tray>
        <Meters>
          <S w={20}><path d="M0 0h20v20H0z" fill="#000" /><path d="M0 9h20v6H0z" fill="#8380ff" /><path d="M0 15h20v5H0z" fill="#413f80" /></S>
          <S w={20}><path d="M0 0h20v20H0z" fill="#000" /><path d="M0 20v-2l2-1 1-3 2 3 1-4h1l1-9h1l1 10 2 3 1 0 1-4 2 4 2 1 2 2z" fill="#b8522a" /><path d="M1 20v-1l3-1 1 1 3-3 3 3 4-2 3 3z" fill="#e8a07c" /></S>
        </Meters>
        <Clock>12:29</Clock>
      </Taskbar>
    </Screen>
  );
}
